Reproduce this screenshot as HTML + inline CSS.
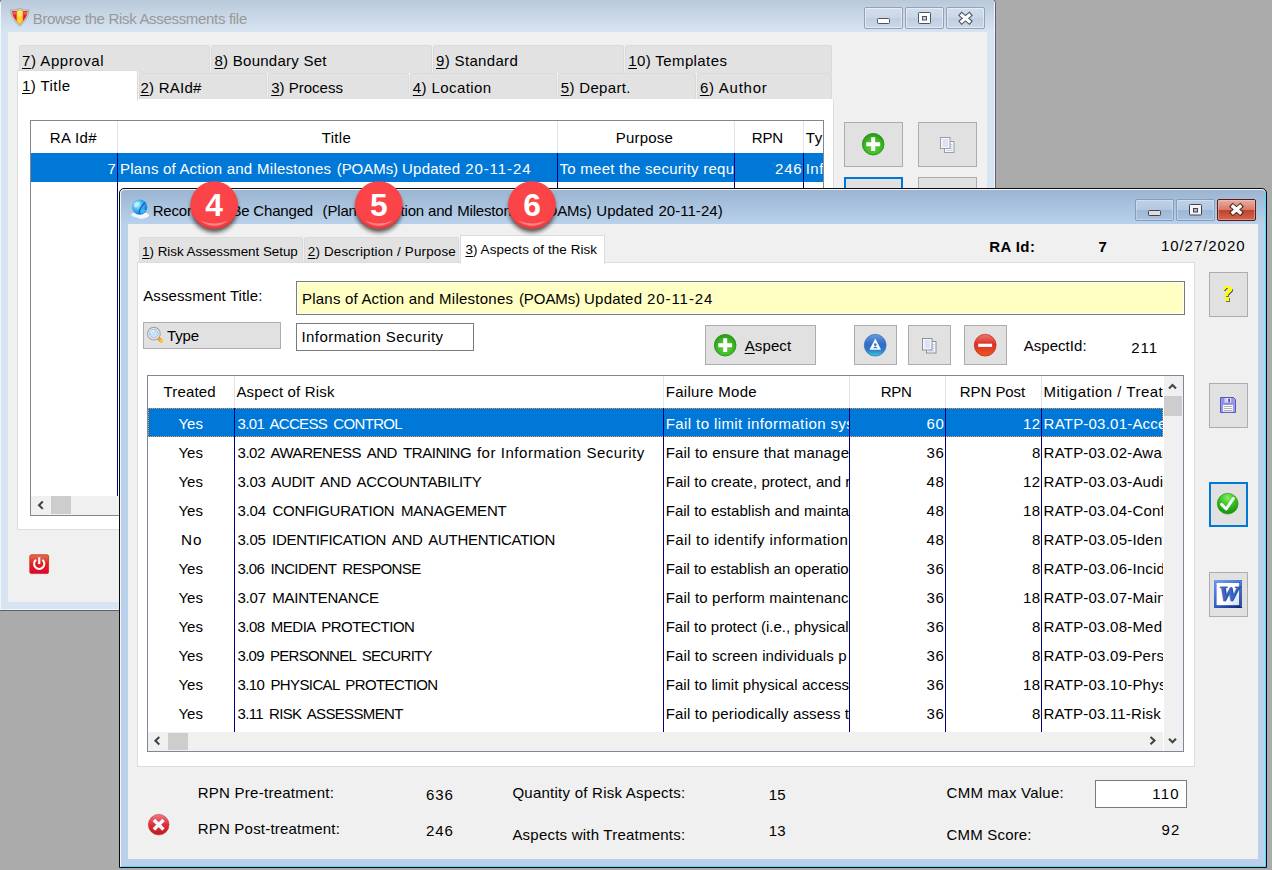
<!-- DOMAINTAG -->
<!DOCTYPE html>
<html><head><meta charset="utf-8"><title>Risk Assessments</title>
<style>
html,body{margin:0;padding:0}
body{width:1272px;height:870px;overflow:hidden;background:#ababab;position:relative;font-family:"Liberation Sans",sans-serif;}
.a{position:absolute;box-sizing:border-box}
.t{position:absolute;white-space:pre;line-height:1;font-family:"Liberation Sans",sans-serif;}
.t u{text-decoration:underline;text-underline-offset:1.5px;text-decoration-thickness:1px}
.tab{background:#e2e2e2;border:1px solid #dadada;border-bottom:none;border-radius:3px 3px 0 0}
.btn{background:#e1e1e1;border:1px solid #adadad}
.vl{width:1px;background:#00007b}
.hl{width:1px;background:#e5e5e5}
.cbi{border:1px solid #93a2b8;border-radius:2px;background:linear-gradient(#d2deec 0,#c9d6e7 48%,#bfcee1 50%,#cbd8e8 100%);box-shadow:inset 0 0 0 1px rgba(255,255,255,.45)}
.cba{border:1px solid #859dbd;border-radius:2px;background:linear-gradient(#bed0e7 0,#b3c8e1 48%,#9db7d5 50%,#aac2de 100%);box-shadow:inset 0 0 0 1px rgba(255,255,255,.3)}
.cbx{border:1px solid #5a1c17;border-radius:2px;background:linear-gradient(#e9ada2 0,#d77a69 48%,#c1402a 50%,#d2674f 100%);box-shadow:inset 0 0 0 1px rgba(255,205,195,.45)}
svg{position:absolute;overflow:visible}
</style></head><body>
<svg width="0" height="0" style="left:0;top:0"><defs>
 <radialGradient id="gg" cx="0.5" cy="0.62" r="0.62"><stop offset="0" stop-color="#62d63c"/><stop offset="0.6" stop-color="#3fb826"/><stop offset="1" stop-color="#2a9318"/></radialGradient>
 <radialGradient id="gk" cx="0.5" cy="0.22" r="0.8"><stop offset="0" stop-color="#86f066"/><stop offset="0.45" stop-color="#3cc222"/><stop offset="1" stop-color="#148a08"/></radialGradient>
 <linearGradient id="bg1" x1="0" y1="0" x2="0" y2="1"><stop offset="0" stop-color="#6a9cdc"/><stop offset="0.45" stop-color="#2f6cc6"/><stop offset="0.72" stop-color="#2e78cc"/><stop offset="1" stop-color="#36cfe0"/></linearGradient>
 <linearGradient id="rg1" x1="0" y1="0" x2="0" y2="1"><stop offset="0" stop-color="#ec7a70"/><stop offset="0.45" stop-color="#de2f28"/><stop offset="1" stop-color="#ea5a1c"/></linearGradient>
 <linearGradient id="rx" x1="0" y1="0" x2="0" y2="1"><stop offset="0" stop-color="#f27888"/><stop offset="0.5" stop-color="#de2f38"/><stop offset="1" stop-color="#bb1a1e"/></linearGradient>
 <linearGradient id="pw" x1="0" y1="0" x2="0" y2="1"><stop offset="0" stop-color="#e2705a"/><stop offset="0.5" stop-color="#e0201e"/><stop offset="1" stop-color="#e00040"/></linearGradient>
 <radialGradient id="gl" cx="0.35" cy="0.35" r="0.75"><stop offset="0" stop-color="#b6f0ff"/><stop offset="0.45" stop-color="#3fb4f2"/><stop offset="1" stop-color="#1566d0"/></radialGradient>
 <linearGradient id="wf" x1="0" y1="0" x2="1" y2="1"><stop offset="0" stop-color="#6a98e8"/><stop offset="0.5" stop-color="#2f5ec8"/><stop offset="1" stop-color="#08206e"/></linearGradient>
 <linearGradient id="wp" x1="0" y1="0" x2="1" y2="1"><stop offset="0" stop-color="#ffffff"/><stop offset="0.6" stop-color="#ffffff"/><stop offset="1" stop-color="#cfd8f4"/></linearGradient>
 <linearGradient id="fl" x1="0" y1="0" x2="1" y2="0"><stop offset="0" stop-color="#9a9af0"/><stop offset="0.5" stop-color="#7c7ce0"/><stop offset="1" stop-color="#a4a4f2"/></linearGradient>
</defs></svg>

<!-- ================= BACK WINDOW ================= -->
<div class="a" id="bw" style="left:-1px;top:-1px;width:997px;height:612px;background:#d7e4f2;border:1px solid #59626e;border-radius:4px 4px 0 0;box-shadow:inset 0 0 0 1px #f1f5fa"></div>
<div class="a" style="left:1px;top:0px;width:993px;height:32px;background:linear-gradient(#bac9da,#d7e4f2);border-radius:3px 3px 0 0"></div>
<div class="a" style="left:8px;top:32px;width:979px;height:570px;background:#f0f0f0"></div>
<!-- caption buttons (inactive) -->
<div class="a cbi" style="left:864px;top:7px;width:39px;height:22px"></div>
<div class="a cbi" style="left:905px;top:7px;width:39px;height:22px"></div>
<div class="a cbi" style="left:946px;top:7px;width:39px;height:22px"></div>
<svg style="left:864px;top:7px" width="121" height="22">
 <rect x="13.500" y="11.500" width="12" height="5" fill="#fdfdfd" stroke="#4d5563" stroke-width="1" rx="0.800"/>
 <rect x="54.500" y="5.500" width="12" height="11" fill="#fdfdfd" stroke="#4d5563" stroke-width="1" rx="0.800"/>
 <rect x="58.500" y="9.500" width="4" height="3.500" fill="#c4d2e4" stroke="#4d5563" stroke-width="1"/>
 <path d="M95.800 6.500 L107.200 16.100 M107.200 6.500 L95.800 16.100" stroke="#4d5563" stroke-width="5.200" stroke-linecap="butt"/>
 <path d="M96.700 7.200 L106.300 15.400 M106.300 7.200 L96.700 15.400" stroke="#fdfdfd" stroke-width="3.200" stroke-linecap="butt"/>
</svg>
<!-- app icon (shield) -->
<svg style="left:10px;top:8px" width="20" height="19" viewBox="0 0 20 19">
 <path d="M0.500 1.800 Q5 2.600 9.800 0.400 Q14.500 2.600 19.200 1.800 Q19 6.500 16.500 10.500 Q14 14.500 9.800 18.300 Q5.500 14.500 3 10.500 Q0.600 6.500 0.500 1.800Z" fill="#c9cfc9" stroke="#9aa39c" stroke-width="0.700"/>
 <path d="M2 3 Q6 3.400 9.800 1.900 Q13.600 3.400 17.700 3 Q17.300 7 15.200 10.300 Q13 13.600 9.800 16.500 Q6.600 13.600 4.400 10.300 Q2.300 7 2 3Z" fill="#e81c24"/>
 <path d="M2.600 3.800 Q4.500 3.900 6.300 3.500 L6.300 6.500 Q4.200 6.300 2.900 6.800Z M17.100 3.800 Q15.200 3.900 13.400 3.500 L13.400 6.500 Q15.400 6.300 16.800 6.800Z" fill="#f46a6a" opacity="0.8"/>
 <path d="M6.400 3.200 Q8.200 2.800 9.800 1.900 Q11.400 2.800 13.200 3.200 L13.200 12.800 L9.800 16.500 L6.400 12.800Z" fill="#f5861f"/>
 <path d="M7.200 3 Q8.600 2.600 9.800 1.900 Q11 2.600 12.400 3 L12.400 13.200 L9.800 16.200 L7.200 13.200Z" fill="#ffd52a"/>
 <path d="M7.200 3 Q8.600 2.600 9.800 1.900 Q11 2.600 12.400 3 L12.400 8.500 L7.200 8.500Z" fill="#ffe766"/>
</svg>
<!-- tabs row 1 -->
<div class="a tab" style="left:19px;top:45px;width:191px;height:28px"></div>
<div class="a tab" style="left:211px;top:45px;width:221px;height:28px"></div>
<div class="a tab" style="left:433px;top:45px;width:191px;height:28px"></div>
<div class="a tab" style="left:625px;top:45px;width:207px;height:28px"></div>
<!-- tabs row 2 -->
<div class="a tab" style="left:139px;top:73px;width:128px;height:27px"></div>
<div class="a tab" style="left:268px;top:73px;width:141px;height:27px"></div>
<div class="a tab" style="left:410px;top:73px;width:147px;height:27px"></div>
<div class="a tab" style="left:558px;top:73px;width:138px;height:27px"></div>
<div class="a tab" style="left:697px;top:73px;width:135px;height:27px"></div>
<!-- white page -->
<div class="a" style="left:17px;top:99px;width:817px;height:431px;background:#fff;border:1px solid #dcdcdc;border-top-color:#fff"></div>
<div class="a" style="left:17px;top:70px;width:121px;height:31px;background:#fff;border:1px solid #dcdcdc;border-bottom:none"></div>
<!-- grid -->
<div class="a" style="left:30px;top:120px;width:794px;height:396px;background:#fff;border:1px solid #828790"></div>
<div class="a" style="left:31px;top:153px;width:792px;height:29px;background:#0078d7"></div>
<div class="a hl" style="left:117px;top:121px;height:32px"></div>
<div class="a hl" style="left:557px;top:121px;height:32px"></div>
<div class="a hl" style="left:734px;top:121px;height:32px"></div>
<div class="a hl" style="left:803px;top:121px;height:32px"></div>
<div class="a vl" style="left:117px;top:153px;height:343px"></div>
<div class="a vl" style="left:557px;top:153px;height:343px"></div>
<div class="a vl" style="left:734px;top:153px;height:343px"></div>
<div class="a vl" style="left:803px;top:153px;height:343px"></div>
<div class="a" style="left:31px;top:496px;width:792px;height:19px;background:#f0f0f0"></div>
<div class="a" style="left:51px;top:496px;width:20px;height:18px;background:#cdcdcd"></div>
<svg style="left:36px;top:500px" width="10" height="10"><path d="M6.800 1.500 L3 5.200 L6.800 8.900" fill="none" stroke="#404040" stroke-width="2"/></svg>
<!-- right buttons -->
<div class="a btn" style="left:844px;top:122px;width:59px;height:45px"></div>
<div class="a btn" style="left:918px;top:122px;width:59px;height:45px"></div>
<div class="a btn" style="left:844px;top:177px;width:59px;height:45px;border:2px solid #0078d7"></div>
<div class="a btn" style="left:918px;top:177px;width:59px;height:45px"></div>
<svg style="left:861.800px;top:133px" width="22.400" height="22.400" viewBox="0 0 22.400 22.400">
 <circle cx="11.200" cy="11.200" r="10.800" fill="url(#gg)" stroke="#2c961a" stroke-width="0.900"/>
 <path d="M11.200 4.300 V18.100 M4.300 11.200 H18.100" stroke="#fff" stroke-width="4"/>
</svg>
<svg style="left:940px;top:136.500px" width="15" height="16" viewBox="0 0 15 16">
 <rect x="4.500" y="4.500" width="9.500" height="11" fill="#f8f9fe" stroke="#9a9ca6"/>
 <path d="M10 7.500 H12.500 M10 9.500 H12.500 M10 11.500 H12.500 M6.500 13.500 H12.500" stroke="#c3cbee" stroke-width="1"/>
 <rect x="0.500" y="0.500" width="9.500" height="11" fill="#f6f7fd" stroke="#9a9ca6"/>
 <path d="M2.500 3 H8 M2.500 5 H8 M2.500 7 H8 M2.500 9 H8" stroke="#c3cbee" stroke-width="1"/>
</svg>
<!-- power button -->
<svg style="left:28.700px;top:553.700px" width="20.400" height="20.400" viewBox="0 0 21 21">
 <rect x="0" y="0" width="21" height="21" rx="2" fill="#fbfdfd" opacity="0.9"/>
 <rect x="0.800" y="0.800" width="19.400" height="19.400" rx="1.600" fill="url(#pw)" stroke="#c8341c" stroke-width="0.900"/>
 <path d="M7.200 5.900 A5.300 5.300 0 1 0 13.800 5.900" fill="none" stroke="#fff" stroke-width="2.100"/>
 <path d="M10.500 3.400 V10.400" stroke="#fff" stroke-width="2.200"/>
</svg>
<div class="t " style="top:11.2px;font-size:15px;letter-spacing:-0.313px;color:#989898;left:32.7px;">Browse the Risk Assessments file</div>
<div class="t " style="top:52.8px;font-size:15px;letter-spacing:0.563px;color:#000;left:22.0px;"><u>7</u>) Approval</div>
<div class="t " style="top:52.8px;font-size:15px;letter-spacing:0.255px;color:#000;left:214.5px;"><u>8</u>) Boundary Set</div>
<div class="t " style="top:52.8px;font-size:15px;letter-spacing:0.325px;color:#000;left:436.1px;"><u>9</u>) Standard</div>
<div class="t " style="top:52.8px;font-size:15px;letter-spacing:0.396px;color:#000;left:628.2px;"><u>1</u>0) Templates</div>
<div class="t " style="top:77.9px;font-size:15px;letter-spacing:0.425px;color:#000;left:22.0px;"><u>1</u>) Title</div>
<div class="t " style="top:80.2px;font-size:15px;letter-spacing:0.266px;color:#000;left:140.4px;"><u>2</u>) RAId#</div>
<div class="t " style="top:80.2px;font-size:15px;letter-spacing:-0.000px;color:#000;left:271.2px;"><u>3</u>) Process</div>
<div class="t " style="top:80.2px;font-size:15px;letter-spacing:0.417px;color:#000;left:412.8px;"><u>4</u>) Location</div>
<div class="t " style="top:80.2px;font-size:15px;letter-spacing:0.326px;color:#000;left:560.8px;"><u>5</u>) Depart.</div>
<div class="t " style="top:80.2px;font-size:15px;letter-spacing:0.744px;color:#000;left:699.9px;"><u>6</u>) Author</div>
<div class="t " style="top:130.3px;font-size:15px;letter-spacing:0.340px;color:#000;left:49.8px;">RA Id#</div>
<div class="t " style="top:130.3px;font-size:15px;letter-spacing:0.337px;color:#000;left:321.7px;">Title</div>
<div class="t " style="top:130.3px;font-size:15px;letter-spacing:0.219px;color:#000;left:615.7px;">Purpose</div>
<div class="t " style="top:130.3px;font-size:15px;letter-spacing:-0.189px;color:#000;left:751.8px;">RPN</div>
<div class="t " style="top:130.3px;font-size:15px;letter-spacing:0.704px;color:#000;left:805.7px;width:17.3px;overflow:hidden;padding-bottom:5px;">Ty</div>
<div class="t " style="top:161.2px;font-size:15px;letter-spacing:0.000px;color:#fff;left:107.5px;">7</div>
<div class="t " style="top:161.2px;font-size:15px;letter-spacing:0.198px;color:#fff;left:120.1px;">Plans of Action and</div>
<div class="t " style="top:161.2px;font-size:15px;letter-spacing:0.242px;color:#fff;left:257.1px;">Milestones</div>
<div class="t " style="top:161.2px;font-size:15px;letter-spacing:-0.042px;color:#fff;left:336.7px;">(POAMs)</div>
<div class="t " style="top:161.2px;font-size:15px;letter-spacing:0.197px;color:#fff;left:402.1px;">Updated</div>
<div class="t " style="top:161.2px;font-size:15px;letter-spacing:0.915px;color:#fff;left:465.2px;">20-11-24</div>
<div class="t " style="top:161.2px;font-size:15px;letter-spacing:0.256px;color:#fff;left:559.5px;width:174.5px;overflow:hidden;padding-bottom:5px;">To meet the security requirements</div>
<div class="t " style="top:161.2px;font-size:15px;letter-spacing:0.787px;color:#fff;left:775.0px;">246</div>
<div class="t " style="top:161.2px;font-size:15px;letter-spacing:0.485px;color:#fff;left:805.7px;width:17.3px;overflow:hidden;padding-bottom:5px;">Information</div>

<!-- ================= FRONT WINDOW ================= -->
<div class="a" style="left:119px;top:188px;width:1148px;height:680px;background:#b9d1ea;border:1px solid #0c0c0c;border-radius:5px 5px 0 0;box-shadow:inset 1px 1px 0 0 #f4f8fc, inset -1px -1px 0 0 #4fdcff"></div>
<div class="a" style="left:121px;top:190px;width:1144px;height:34px;background:linear-gradient(#9bb5d2,#b9d1ea);border-radius:4px 4px 0 0"></div>
<div class="a" style="left:128px;top:224px;width:1130px;height:635px;background:#f0f0f0"></div>
<!-- caption buttons (active) -->
<div class="a cba" style="left:1135px;top:199px;width:39px;height:22px"></div>
<div class="a cba" style="left:1176px;top:199px;width:39px;height:22px"></div>
<div class="a cbx" style="left:1217px;top:199px;width:39px;height:22px"></div>
<svg style="left:1135px;top:199px" width="121" height="22">
 <rect x="13.500" y="11.500" width="12" height="5" fill="#dedede" stroke="#43434f" stroke-width="1" rx="0.800"/>
 <rect x="54.500" y="5.500" width="12" height="10.500" fill="#f4f4f4" stroke="#43434f" stroke-width="1" rx="0.800"/>
 <rect x="58.500" y="9.500" width="4" height="3.500" fill="#a3bbd8" stroke="#43434f" stroke-width="1"/>
 <path d="M95.800 5.700 L107.200 15.300 M107.200 5.700 L95.800 15.300" stroke="#4a2420" stroke-width="5.400" stroke-linecap="butt"/>
 <path d="M96.700 6.400 L106.300 14.600 M106.300 6.400 L96.700 14.600" stroke="#fbfbfb" stroke-width="3.400" stroke-linecap="butt"/>
</svg>
<!-- globe icon -->
<svg style="left:130px;top:199px" width="20" height="21" viewBox="0 0 20 21">
 <ellipse cx="9.800" cy="16.300" rx="9.300" ry="3.400" fill="#f2f8fd"/>
 <path d="M0.800 15.500 Q2 19.200 9 19.300" fill="none" stroke="#7fd6f6" stroke-width="1.100" opacity="0.9"/>
 <circle cx="9.700" cy="8.200" r="7.600" fill="url(#gl)"/>
 <path d="M4.500 4 Q8 1.500 10 4 Q8.500 7.500 5.500 8.500 Q3.200 7 4.500 4Z" fill="#c9f4ff" opacity="0.75"/>
 <path d="M15 3.500 Q10 8 9 14.500" fill="none" stroke="#0e4fc0" stroke-width="1.300" opacity="0.85"/>
 <path d="M10.500 11 Q14 9.500 16 11.500 Q14.500 14.800 11 14.500Z" fill="#38c0f4" opacity="0.9"/>
</svg>
<!-- tabs -->
<div class="a tab" style="left:139px;top:237px;width:164px;height:26px"></div>
<div class="a tab" style="left:304px;top:237px;width:155px;height:26px"></div>
<!-- white page -->
<div class="a" style="left:137px;top:262px;width:1058px;height:505px;background:#fff;border:1px solid #dcdcdc"></div>
<div class="a" style="left:460px;top:235px;width:145px;height:29px;background:#fff;border:1px solid #dcdcdc;border-bottom:none"></div>
<!-- fields -->
<div class="a" style="left:296px;top:281px;width:889px;height:34px;background:#ffffc3;border:1px solid #7a7a7a;box-shadow:inset 0 0 0 1px #fff"></div>
<div class="a btn" style="left:143px;top:322px;width:138px;height:27px"></div>
<div class="a" style="left:296px;top:323px;width:178px;height:28px;background:#fff;border:1px solid #7a7a7a"></div>
<svg style="left:146px;top:326px" width="19" height="18" viewBox="0 0 19 18">
 <path d="M12.300 12.200 L15.300 14.900" stroke="#ff9e1a" stroke-width="3.600" stroke-linecap="round"/>
 <circle cx="15.400" cy="14.700" r="1.300" fill="#ffd23e"/>
 <circle cx="7.900" cy="7.700" r="6.300" fill="#f6f6f8" stroke="#a2a2ac" stroke-width="1.200"/>
 <circle cx="7.900" cy="7.700" r="4.300" fill="#bfe5fa" stroke="#b0b0ba" stroke-width="0.900"/>
 <path d="M5.200 7 A3 3 0 0 1 8 4.600" fill="none" stroke="#eefaff" stroke-width="1.100"/>
</svg>
<div class="a btn" style="left:705px;top:325px;width:111px;height:40px"></div>
<div class="a btn" style="left:854px;top:325px;width:43px;height:40px"></div>
<div class="a btn" style="left:908px;top:325px;width:43px;height:40px"></div>
<div class="a btn" style="left:964px;top:325px;width:43px;height:40px"></div>
<svg style="left:713.700px;top:333.700px" width="22.400" height="22.400" viewBox="0 0 22.400 22.400">
 <circle cx="11.200" cy="11.200" r="10.800" fill="url(#gg)" stroke="#2c961a" stroke-width="0.900"/>
 <path d="M11.200 4.300 V18.100 M4.300 11.200 H18.100" stroke="#fff" stroke-width="4"/>
</svg>
<svg style="left:863.800px;top:333.800px" width="22.400" height="22.400" viewBox="0 0 22.400 22.400">
 <circle cx="11.200" cy="11.200" r="10.900" fill="url(#bg1)" stroke="#3a70c0" stroke-width="0.700"/>
 <path d="M11.300 4.600 L17.100 15.800 H5.500Z" fill="#fff"/>
 <circle cx="11.300" cy="10.700" r="1.400" fill="#3a78d0"/>
 <path d="M8.800 14.300 Q11.300 10.800 13.800 14.300Z" fill="#3a78d0"/>
</svg>
<svg style="left:922px;top:338px" width="15" height="16" viewBox="0 0 15 16">
 <rect x="4.500" y="3.500" width="9.500" height="11.500" fill="#f8f9fe" stroke="#8e8e94"/>
 <path d="M10.200 6.500 H12.500 M10.200 8.500 H12.500 M10.200 10.500 H12.500 M6.500 13 H12.500" stroke="#c3cbee" stroke-width="1"/>
 <rect x="0.500" y="0.500" width="9.500" height="11.500" fill="#f6f7fd" stroke="#8e8e94"/>
 <path d="M2.500 3 H8 M2.500 5 H8 M2.500 7 H8 M2.500 9 H8" stroke="#c3cbee" stroke-width="1.100"/>
</svg>
<svg style="left:973.900px;top:333.800px" width="22.400" height="22.400" viewBox="0 0 22.400 22.400">
 <circle cx="11.200" cy="11.200" r="10.900" fill="url(#rg1)" stroke="#c8281c" stroke-width="0.700"/>
 <path d="M4.200 11.300 H18.100" stroke="#fff" stroke-width="3.200"/>
</svg>
<!-- grid -->
<div class="a" style="left:147px;top:375px;width:1037px;height:377px;background:#fff;border:1px solid #7f8896"></div>
<div class="a" style="left:148px;top:408px;width:1015px;height:29px;background:#0078d7;border:1px dotted #ff962e"></div>
<div class="a hl" style="left:234px;top:376px;height:32px"></div>
<div class="a hl" style="left:663px;top:376px;height:32px"></div>
<div class="a hl" style="left:849px;top:376px;height:32px"></div>
<div class="a hl" style="left:945px;top:376px;height:32px"></div>
<div class="a hl" style="left:1041px;top:376px;height:32px"></div>
<div class="a vl" style="left:234px;top:408px;height:324px"></div>
<div class="a vl" style="left:663px;top:408px;height:324px"></div>
<div class="a vl" style="left:849px;top:408px;height:324px"></div>
<div class="a vl" style="left:945px;top:408px;height:324px"></div>
<div class="a vl" style="left:1041px;top:408px;height:324px"></div>
<!-- scrollbars -->
<div class="a" style="left:1164px;top:376px;width:19px;height:375px;background:#f0f0f0"></div>
<div class="a" style="left:148px;top:732px;width:1015px;height:19px;background:#f0f0f0"></div>
<div class="a" style="left:1164px;top:396px;width:18px;height:20px;background:#cdcdcd"></div>
<div class="a" style="left:168px;top:733px;width:20px;height:17px;background:#cdcdcd"></div>
<svg style="left:1167px;top:381px" width="12" height="10"><path d="M2 7.500 L5.500 4 L9 7.500" fill="none" stroke="#454545" stroke-width="2.100"/></svg>
<svg style="left:1167px;top:736px" width="12" height="10"><path d="M2 2.700 L5.500 6.300 L9 2.700" fill="none" stroke="#454545" stroke-width="2.100"/></svg>
<svg style="left:152px;top:736px" width="10" height="10"><path d="M7.300 1 L3.400 4.700 L7.300 8.400" fill="none" stroke="#404040" stroke-width="2"/></svg>
<svg style="left:1148px;top:736px" width="10" height="10"><path d="M2.500 1 L6.500 4.600 L2.500 8.200" fill="none" stroke="#404040" stroke-width="2"/></svg>
<!-- side buttons -->
<div class="a btn" style="left:1209px;top:272px;width:39px;height:45px"></div>
<div class="a btn" style="left:1209px;top:383px;width:39px;height:45px"></div>
<div class="a btn" style="left:1209px;top:482px;width:39px;height:45px;border:2px solid #0078d7"></div>
<div class="a btn" style="left:1209px;top:572px;width:39px;height:45px"></div>
<svg style="left:1222px;top:285px" width="13" height="17" viewBox="0 0 13 17" shape-rendering="crispEdges">
 <g fill="#6e6e6e" transform="translate(1,1)"><path d="M3 1 H8 V2 H9 V3 H10 V6 H9 V7 H8 V8 H7 V9 H6 V11 H3 V8 H4 V7 H5 V6 H6 V5 H7 V4 H6 V3 H4 V4 H3 V5 H1 V3 H2 V2 H3Z M3 12 H7 V16 H3Z"/></g>
 <g fill="#ffff00"><path d="M3 1 H8 V2 H9 V3 H10 V6 H9 V7 H8 V8 H7 V9 H6 V11 H3 V8 H4 V7 H5 V6 H6 V5 H7 V4 H6 V3 H4 V4 H3 V5 H1 V3 H2 V2 H3Z M3 12 H7 V16 H3Z"/></g>
</svg>
<svg style="left:1220px;top:397px" width="16" height="16" viewBox="0 0 16 16">
 <path d="M0.500 0.500 H13.500 L15.500 2.500 V15.500 H0.500Z" fill="url(#fl)" stroke="#5656b4" stroke-width="1"/>
 <rect x="4.600" y="1" width="6.600" height="4.600" fill="#e9e9f6"/>
 <rect x="4.600" y="1" width="2" height="4.600" fill="#c8c8ec"/>
 <rect x="8.300" y="1.600" width="1.700" height="3.600" fill="#3c4aa8"/>
 <rect x="2.800" y="7.600" width="10.400" height="7.400" fill="#fbfbfd" stroke="#8a8ad8" stroke-width="0.600"/>
 <path d="M4 9.500 H12 M4 11.500 H12 M4 13.500 H12" stroke="#aaaaae" stroke-width="0.900"/>
</svg>
<svg style="left:1217.300px;top:492.800px" width="21.400" height="21.400" viewBox="0 0 21.400 21.400">
 <circle cx="10.700" cy="10.700" r="10.400" fill="url(#gk)" stroke="#1f940f" stroke-width="0.600"/>
 <path d="M4.600 11.400 L9.200 16 L16.200 5.600" fill="none" stroke="#f4f8ff" stroke-width="3" stroke-linecap="round" stroke-linejoin="round"/>
</svg>
<svg style="left:1214px;top:580px" width="28" height="28" viewBox="0 0 28 28">
 <rect x="0" y="0" width="28" height="28" fill="url(#wf)"/>
 <rect x="2.600" y="2.900" width="22.600" height="22.300" fill="url(#wp)"/>
 <path d="M1 1 H27 V27" fill="none" stroke="#9dbcf4" stroke-width="0.800" opacity="0.7"/>
 <g transform="translate(14.300 0) scale(1.030 1) translate(-14.300 0)">
 <text x="14.600" y="21" font-family="Liberation Serif, serif" font-weight="bold" font-style="italic" font-size="22" text-anchor="middle" fill="#0c2a78" stroke="#0c2a78" stroke-width="0.700" transform="translate(0.700,0.500)">W</text>
 <text x="14.600" y="21" font-family="Liberation Serif, serif" font-weight="bold" font-style="italic" font-size="22" text-anchor="middle" fill="#3d66c9" stroke="#3d66c9" stroke-width="0.700">W</text>
 </g>
</svg>
<!-- bottom -->
<div class="a" style="left:1095px;top:780px;width:92px;height:28px;background:#fff;border:1px solid #7a7a7a"></div>
<svg style="left:148.300px;top:813.700px" width="21.400" height="21.400" viewBox="0 0 21.400 21.400">
 <circle cx="10.700" cy="10.700" r="10.300" fill="url(#rx)" stroke="#c2282c" stroke-width="0.600"/>
 <path d="M5.900 5.900 L15.500 15.500 M15.500 5.900 L5.900 15.500" stroke="#f1f7fd" stroke-width="3.500" stroke-linecap="butt"/>
</svg>
<div class="t front" style="top:203.0px;font-size:15px;letter-spacing:-0.179px;color:#000;left:152.7px;">Record Will Be Changed</div>
<div class="t front" style="top:203.0px;font-size:15px;letter-spacing:-0.175px;color:#000;left:322.6px;">(Plans of Action and</div>
<div class="t front" style="top:203.0px;font-size:15px;letter-spacing:-0.179px;color:#000;left:457.2px;">Milestones (POAMs)</div>
<div class="t front" style="top:203.0px;font-size:15px;letter-spacing:0.105px;color:#000;left:596.2px;">Updated</div>
<div class="t front" style="top:203.0px;font-size:15px;letter-spacing:0.043px;color:#000;left:658.4px;">20-11-24)</div>
<div class="t front" style="top:244.6px;font-size:13.4px;letter-spacing:-0.025px;color:#000;left:142.1px;"><u>1</u>) Risk Assessment Setup</div>
<div class="t front" style="top:244.6px;font-size:13.4px;letter-spacing:0.189px;color:#000;left:307.8px;"><u>2</u>) Description / Purpose</div>
<div class="t front" style="top:242.7px;font-size:13.4px;letter-spacing:0.102px;color:#000;left:465.4px;"><u>3</u>) Aspects of the Risk</div>
<div class="t front" style="top:239.0px;font-size:15px;letter-spacing:0.435px;color:#000;font-weight:bold;left:989.2px;">RA Id:</div>
<div class="t front" style="top:239.0px;font-size:15px;letter-spacing:0.000px;color:#000;font-weight:bold;left:1098.4px;">7</div>
<div class="t front" style="top:238.2px;font-size:15px;letter-spacing:0.950px;color:#000;left:1160.9px;">10/27/2020</div>
<div class="t front" style="top:288.0px;font-size:15px;letter-spacing:0.100px;color:#000;left:143.2px;">Assessment Title:</div>
<div class="t front" style="top:290.5px;font-size:15px;letter-spacing:0.198px;color:#000;left:302.1px;">Plans of Action and</div>
<div class="t front" style="top:290.5px;font-size:15px;letter-spacing:0.242px;color:#000;left:439.1px;">Milestones</div>
<div class="t front" style="top:290.5px;font-size:15px;letter-spacing:-0.057px;color:#000;left:518.9px;">(POAMs)</div>
<div class="t front" style="top:290.5px;font-size:15px;letter-spacing:0.197px;color:#000;left:584.1px;">Updated</div>
<div class="t front" style="top:290.5px;font-size:15px;letter-spacing:0.928px;color:#000;left:647.0px;">20-11-24</div>
<div class="t front" style="top:328.4px;font-size:15px;letter-spacing:-0.095px;color:#000;left:166.9px;">Type</div>
<div class="t front" style="top:329.2px;font-size:15px;letter-spacing:0.426px;color:#000;left:301.5px;">Information Security</div>
<div class="t front" style="top:337.6px;font-size:15px;letter-spacing:0.116px;color:#000;left:744.7px;"><u>A</u>spect</div>
<div class="t front" style="top:337.7px;font-size:15px;letter-spacing:0.042px;color:#000;left:1023.7px;">AspectId:</div>
<div class="t front" style="top:339.7px;font-size:15px;letter-spacing:0.991px;color:#000;left:1131.2px;">211</div>
<div class="t front" style="top:384.4px;font-size:15px;letter-spacing:0.132px;color:#000;left:163.6px;">Treated</div>
<div class="t front" style="top:384.4px;font-size:15px;letter-spacing:0.165px;color:#000;left:236.4px;">Aspect of Risk</div>
<div class="t front" style="top:384.4px;font-size:15px;letter-spacing:0.309px;color:#000;left:665.7px;">Failure Mode</div>
<div class="t front" style="top:384.4px;font-size:15px;letter-spacing:-0.269px;color:#000;left:880.8px;">RPN</div>
<div class="t front" style="top:384.4px;font-size:15px;letter-spacing:-0.061px;color:#000;left:959.8px;">RPN Post</div>
<div class="t front" style="top:384.4px;font-size:15px;letter-spacing:0.486px;color:#000;left:1043.6px;width:119.0px;overflow:hidden;padding-bottom:5px;">Mitigation / Treatment</div>
<div class="t front" style="top:416.0px;font-size:15px;letter-spacing:0.086px;color:#fff;left:178.4px;">Yes</div>
<div class="t front" style="top:416.0px;font-size:15px;letter-spacing:-0.651px;color:#fff;word-spacing:2.6px;left:237.5px;">3.01 ACCESS CONTROL</div>
<div class="t front" style="top:416.0px;font-size:15px;letter-spacing:0.407px;color:#fff;left:665.7px;width:183.8px;overflow:hidden;padding-bottom:5px;">Fail to limit information sys</div>
<div class="t front" style="top:416.0px;font-size:15px;letter-spacing:0.608px;color:#fff;left:926.6px;">60</div>
<div class="t front" style="top:416.0px;font-size:15px;letter-spacing:0.608px;color:#fff;left:1022.9px;">12</div>
<div class="t front" style="top:416.0px;font-size:15px;letter-spacing:0.217px;color:#fff;left:1043.6px;width:119.0px;overflow:hidden;padding-bottom:5px;">RATP-03.01-Access</div>
<div class="t front" style="top:445.0px;font-size:15px;letter-spacing:0.086px;color:#000;left:178.4px;">Yes</div>
<div class="t front" style="top:445.0px;font-size:15px;letter-spacing:-0.444px;color:#000;word-spacing:2.6px;left:237.5px;">3.02 AWARENESS AND TRAINING</div>
<div class="t front" style="top:445.0px;font-size:15px;letter-spacing:0.538px;color:#000;left:476.9px;">for Information Security</div>
<div class="t front" style="top:445.0px;font-size:15px;letter-spacing:0.194px;color:#000;left:665.7px;width:183.8px;overflow:hidden;padding-bottom:5px;">Fail to ensure that management</div>
<div class="t front" style="top:445.0px;font-size:15px;letter-spacing:0.608px;color:#000;left:926.6px;">36</div>
<div class="t front" style="top:445.0px;font-size:15px;letter-spacing:0.000px;color:#000;left:1031.9px;">8</div>
<div class="t front" style="top:445.0px;font-size:15px;letter-spacing:0.217px;color:#000;left:1043.6px;width:119.0px;overflow:hidden;padding-bottom:5px;">RATP-03.02-Awareness</div>
<div class="t front" style="top:474.0px;font-size:15px;letter-spacing:0.086px;color:#000;left:178.4px;">Yes</div>
<div class="t front" style="top:474.0px;font-size:15px;letter-spacing:-0.289px;color:#000;word-spacing:2.6px;left:237.5px;">3.03 AUDIT AND ACCOUNTABILITY</div>
<div class="t front" style="top:474.0px;font-size:15px;letter-spacing:0.041px;color:#000;left:665.7px;width:183.8px;overflow:hidden;padding-bottom:5px;">Fail to create, protect, and retain</div>
<div class="t front" style="top:474.0px;font-size:15px;letter-spacing:0.608px;color:#000;left:926.6px;">48</div>
<div class="t front" style="top:474.0px;font-size:15px;letter-spacing:0.608px;color:#000;left:1022.9px;">12</div>
<div class="t front" style="top:474.0px;font-size:15px;letter-spacing:0.217px;color:#000;left:1043.6px;width:119.0px;overflow:hidden;padding-bottom:5px;">RATP-03.03-Audit</div>
<div class="t front" style="top:503.0px;font-size:15px;letter-spacing:0.086px;color:#000;left:178.4px;">Yes</div>
<div class="t front" style="top:503.0px;font-size:15px;letter-spacing:-0.206px;color:#000;word-spacing:2.6px;left:237.5px;">3.04 CONFIGURATION MANAGEMENT</div>
<div class="t front" style="top:503.0px;font-size:15px;letter-spacing:0.029px;color:#000;left:665.7px;width:183.8px;overflow:hidden;padding-bottom:5px;">Fail to establish and maintain</div>
<div class="t front" style="top:503.0px;font-size:15px;letter-spacing:0.608px;color:#000;left:926.6px;">48</div>
<div class="t front" style="top:503.0px;font-size:15px;letter-spacing:0.608px;color:#000;left:1022.9px;">18</div>
<div class="t front" style="top:503.0px;font-size:15px;letter-spacing:0.217px;color:#000;left:1043.6px;width:119.0px;overflow:hidden;padding-bottom:5px;">RATP-03.04-Config</div>
<div class="t front" style="top:531.9px;font-size:15.3px;letter-spacing:1.092px;color:#000;left:180.9px;">No</div>
<div class="t front" style="top:532.0px;font-size:15px;letter-spacing:-0.281px;color:#000;word-spacing:2.6px;left:237.5px;">3.05 IDENTIFICATION AND AUTHENTICATION</div>
<div class="t front" style="top:532.0px;font-size:15px;letter-spacing:0.417px;color:#000;left:665.7px;width:183.8px;overflow:hidden;padding-bottom:5px;">Fail to identify information s</div>
<div class="t front" style="top:532.0px;font-size:15px;letter-spacing:0.608px;color:#000;left:926.6px;">48</div>
<div class="t front" style="top:532.0px;font-size:15px;letter-spacing:0.000px;color:#000;left:1031.9px;">8</div>
<div class="t front" style="top:532.0px;font-size:15px;letter-spacing:0.217px;color:#000;left:1043.6px;width:119.0px;overflow:hidden;padding-bottom:5px;">RATP-03.05-Identification</div>
<div class="t front" style="top:561.0px;font-size:15px;letter-spacing:0.086px;color:#000;left:178.4px;">Yes</div>
<div class="t front" style="top:561.0px;font-size:15px;letter-spacing:-0.616px;color:#000;word-spacing:2.6px;left:237.5px;">3.06 INCIDENT RESPONSE</div>
<div class="t front" style="top:561.0px;font-size:15px;letter-spacing:-0.019px;color:#000;left:665.7px;width:183.8px;overflow:hidden;padding-bottom:5px;">Fail to establish an operational</div>
<div class="t front" style="top:561.0px;font-size:15px;letter-spacing:0.608px;color:#000;left:926.6px;">36</div>
<div class="t front" style="top:561.0px;font-size:15px;letter-spacing:0.000px;color:#000;left:1031.9px;">8</div>
<div class="t front" style="top:561.0px;font-size:15px;letter-spacing:0.217px;color:#000;left:1043.6px;width:119.0px;overflow:hidden;padding-bottom:5px;">RATP-03.06-Incident</div>
<div class="t front" style="top:590.0px;font-size:15px;letter-spacing:0.086px;color:#000;left:178.4px;">Yes</div>
<div class="t front" style="top:590.0px;font-size:15px;letter-spacing:-0.242px;color:#000;word-spacing:2.6px;left:237.5px;">3.07 MAINTENANCE</div>
<div class="t front" style="top:590.0px;font-size:15px;letter-spacing:0.176px;color:#000;left:665.7px;width:183.8px;overflow:hidden;padding-bottom:5px;">Fail to perform maintenance</div>
<div class="t front" style="top:590.0px;font-size:15px;letter-spacing:0.608px;color:#000;left:926.6px;">36</div>
<div class="t front" style="top:590.0px;font-size:15px;letter-spacing:0.608px;color:#000;left:1022.9px;">18</div>
<div class="t front" style="top:590.0px;font-size:15px;letter-spacing:0.217px;color:#000;left:1043.6px;width:119.0px;overflow:hidden;padding-bottom:5px;">RATP-03.07-Maintenance</div>
<div class="t front" style="top:619.0px;font-size:15px;letter-spacing:0.086px;color:#000;left:178.4px;">Yes</div>
<div class="t front" style="top:619.0px;font-size:15px;letter-spacing:-0.519px;color:#000;word-spacing:2.6px;left:237.5px;">3.08 MEDIA PROTECTION</div>
<div class="t front" style="top:619.0px;font-size:15px;letter-spacing:0.011px;color:#000;left:665.7px;width:183.8px;overflow:hidden;padding-bottom:5px;">Fail to protect (i.e., physically</div>
<div class="t front" style="top:619.0px;font-size:15px;letter-spacing:0.608px;color:#000;left:926.6px;">36</div>
<div class="t front" style="top:619.0px;font-size:15px;letter-spacing:0.000px;color:#000;left:1031.9px;">8</div>
<div class="t front" style="top:619.0px;font-size:15px;letter-spacing:0.217px;color:#000;left:1043.6px;width:119.0px;overflow:hidden;padding-bottom:5px;">RATP-03.08-Media</div>
<div class="t front" style="top:648.0px;font-size:15px;letter-spacing:0.086px;color:#000;left:178.4px;">Yes</div>
<div class="t front" style="top:648.0px;font-size:15px;letter-spacing:-0.704px;color:#000;word-spacing:2.6px;left:237.5px;">3.09 PERSONNEL SECURITY</div>
<div class="t front" style="top:648.0px;font-size:15px;letter-spacing:0.150px;color:#000;left:665.7px;width:183.8px;overflow:hidden;padding-bottom:5px;">Fail to screen individuals p</div>
<div class="t front" style="top:648.0px;font-size:15px;letter-spacing:0.608px;color:#000;left:926.6px;">36</div>
<div class="t front" style="top:648.0px;font-size:15px;letter-spacing:0.000px;color:#000;left:1031.9px;">8</div>
<div class="t front" style="top:648.0px;font-size:15px;letter-spacing:0.217px;color:#000;left:1043.6px;width:119.0px;overflow:hidden;padding-bottom:5px;">RATP-03.09-Personnel</div>
<div class="t front" style="top:677.0px;font-size:15px;letter-spacing:0.086px;color:#000;left:178.4px;">Yes</div>
<div class="t front" style="top:677.0px;font-size:15px;letter-spacing:-0.609px;color:#000;word-spacing:2.6px;left:237.5px;">3.10 PHYSICAL PROTECTION</div>
<div class="t front" style="top:677.0px;font-size:15px;letter-spacing:0.088px;color:#000;left:665.7px;width:183.8px;overflow:hidden;padding-bottom:5px;">Fail to limit physical access </div>
<div class="t front" style="top:677.0px;font-size:15px;letter-spacing:0.608px;color:#000;left:926.6px;">36</div>
<div class="t front" style="top:677.0px;font-size:15px;letter-spacing:0.608px;color:#000;left:1022.9px;">18</div>
<div class="t front" style="top:677.0px;font-size:15px;letter-spacing:0.217px;color:#000;left:1043.6px;width:119.0px;overflow:hidden;padding-bottom:5px;">RATP-03.10-Physical</div>
<div class="t front" style="top:706.0px;font-size:15px;letter-spacing:0.086px;color:#000;left:178.4px;">Yes</div>
<div class="t front" style="top:706.0px;font-size:15px;letter-spacing:-0.658px;color:#000;word-spacing:2.6px;left:237.5px;">3.11 RISK ASSESSMENT</div>
<div class="t front" style="top:706.0px;font-size:15px;letter-spacing:0.146px;color:#000;left:665.7px;width:183.8px;overflow:hidden;padding-bottom:5px;">Fail to periodically assess th</div>
<div class="t front" style="top:706.0px;font-size:15px;letter-spacing:0.608px;color:#000;left:926.6px;">36</div>
<div class="t front" style="top:706.0px;font-size:15px;letter-spacing:0.000px;color:#000;left:1031.9px;">8</div>
<div class="t front" style="top:706.0px;font-size:15px;letter-spacing:0.194px;color:#000;left:1043.6px;width:119.0px;overflow:hidden;padding-bottom:5px;">RATP-03.11-Risk</div>
<div class="t front" style="top:784.7px;font-size:15px;letter-spacing:0.262px;color:#000;left:197.7px;">RPN Pre-treatment:</div>
<div class="t front" style="top:820.5px;font-size:15px;letter-spacing:0.211px;color:#000;left:197.7px;">RPN Post-treatment:</div>
<div class="t front" style="top:787.0px;font-size:15px;letter-spacing:0.988px;color:#000;left:425.9px;">636</div>
<div class="t front" style="top:823.0px;font-size:15px;letter-spacing:0.988px;color:#000;left:425.9px;">246</div>
<div class="t front" style="top:784.7px;font-size:15px;letter-spacing:0.247px;color:#000;left:512.4px;">Quantity of Risk Aspects:</div>
<div class="t front" style="top:826.6px;font-size:15px;letter-spacing:0.222px;color:#000;left:512.4px;">Aspects with Treatments:</div>
<div class="t front" style="top:787.0px;font-size:15px;letter-spacing:0.275px;color:#000;left:768.7px;">15</div>
<div class="t front" style="top:823.0px;font-size:15px;letter-spacing:0.275px;color:#000;left:768.7px;">13</div>
<div class="t front" style="top:785.0px;font-size:15px;letter-spacing:0.243px;color:#000;left:946.6px;">CMM max Value:</div>
<div class="t front" style="top:826.8px;font-size:15px;letter-spacing:0.174px;color:#000;left:946.6px;">CMM Score:</div>
<div class="t front" style="top:786.4px;font-size:15px;letter-spacing:1.271px;color:#000;left:1152.2px;">110</div>
<div class="t front" style="top:822.4px;font-size:15px;letter-spacing:1.075px;color:#000;left:1161.6px;">92</div>

<!-- ================= BADGES ================= -->
<svg style="left:0;top:0" width="1272" height="870" viewBox="0 0 1272 870">
 <defs>
  <radialGradient id="bd" cx="0.5" cy="0.42" r="0.56"><stop offset="0" stop-color="#fb4649"/><stop offset="0.9" stop-color="#fa4346"/><stop offset="1" stop-color="#e93a3e"/></radialGradient>
  <filter id="sh" x="-30%" y="-30%" width="160%" height="170%"><feGaussianBlur stdDeviation="2"/></filter>
  <g id="badge">
   <circle cx="0" cy="3.800" r="23.300" fill="#1c1414" opacity="0.72" filter="url(#sh)"/>
   <circle cx="0" cy="0" r="23.900" fill="url(#bd)"/>
   <path d="M-13.800 15.600 Q0 25.600 13.800 15.600 Q0 21 -13.800 15.600Z" fill="#fc8587"/>
  </g>
 </defs>
 <use href="#badge" x="214.200" y="205.100"/>
 <use href="#badge" x="378.800" y="205.100"/>
 <use href="#badge" x="532" y="205.100"/>
 <g font-family="Liberation Sans, sans-serif" font-weight="bold" font-size="31.800" fill="#fff" text-anchor="middle">
  <text x="214.200" y="216.400">4</text><text x="378.800" y="216.400">5</text><text x="532" y="216.400">6</text>
 </g>
</svg>
</body></html>
